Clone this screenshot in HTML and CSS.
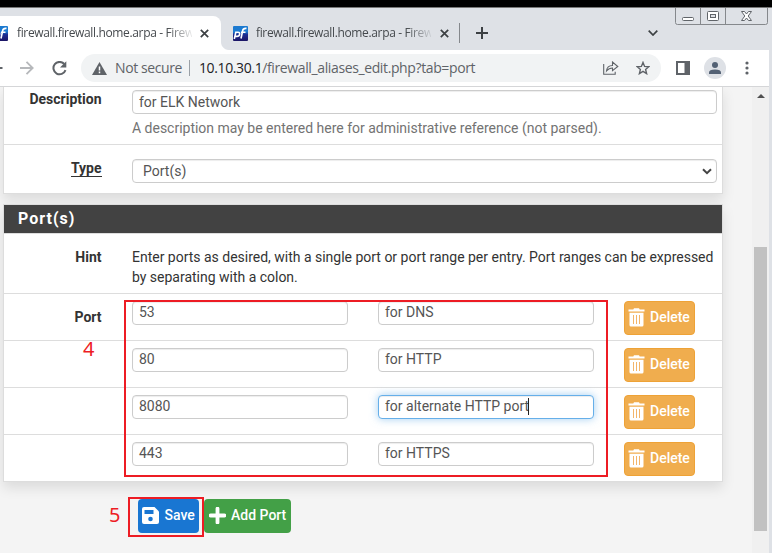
FILE: index.html
```html
<!DOCTYPE html>
<html lang="en">
<head>
<meta charset="utf-8">
<title>firewall.firewall.home.arpa - Firewall: Aliases: Edit</title>
<link rel="stylesheet" href="styles.css">
</head>
<body>
<svg width="0" height="0" class="defs">
  <defs>
    <linearGradient id="pfg" x1="0" y1="0" x2="0" y2="1"><stop offset="0.4" stop-color="#1c7ad0"/><stop offset="0.55" stop-color="#1d2f94"/><stop offset="1" stop-color="#1b1464"/></linearGradient>
    <symbol id="pf" viewBox="0 0 15 15"><rect width="15" height="15" rx="1" fill="url(#pfg)"/><path d="M1.300 13 2.800 6.300h2.200q2 0 1.600 2Q6.200 10.400 4 10.400H2.500M8 12.500l1.700-8Q10.200 2 13.500 2.400M8 6.300h4.500" fill="none" stroke="#fff" stroke-width="1.600"/></symbol>
    <symbol id="x" viewBox="0 0 9 9"><path d="M.8.8l7.400 7.400M8.200.8.800 8.200" stroke="#3c4043" stroke-width="1.700"/></symbol>
    <symbol id="trash" viewBox="0 0 17 19"><path d="M.5 1.500h4.800L6 .3h5l.7 1.200h4.800v2H.5zM1.500 4.800h14v12.200q0 1.500-1.500 1.500H3q-1.500 0-1.500-1.500z" fill="#fff"/><path d="M5.500 7v9M8.500 7v9M11.500 7v9" stroke="#f3b56a" stroke-width="1"/></symbol>
  </defs>
</svg>
<div class="window">
  <header class="tabs">
    <div class="tab active"><svg class="fav"><use href="#pf"/></svg><span class="title">firewall.firewall.home.arpa - Firew</span><svg class="x"><use href="#x"/></svg></div>
    <div class="tab"><svg class="fav"><use href="#pf"/></svg><span class="title">firewall.firewall.home.arpa - Firew</span><svg class="x"><use href="#x"/></svg></div>
    <i class="tabsep"></i>
    <svg class="plus" viewBox="0 0 12 12"><path d="M6 0v12M0 6h12" stroke="#3c4043" stroke-width="2"/></svg>
    <svg class="chev" viewBox="0 0 10 6"><path d="M.7.7 5 5 9.300.7" fill="none" stroke="#3c4043" stroke-width="1.700"/></svg>
    <svg class="controls" viewBox="0 0 94 18"><path d="M.5 0v14.500q0 2 2 2h88q2 0 2-2V0M25.500 0v16M50.500 0v16" fill="none" stroke="#85888c"/><rect x="7.500" y="9.500" width="11" height="3" rx="1" fill="#fff" stroke="#606469"/><rect x="32.500" y="3.500" width="11" height="9" rx="1" fill="#fff" stroke="#606469"/><rect x="35.500" y="6.500" width="5" height="3" fill="#dee1e6" stroke="#606469"/><path d="M66.500 3.500h3l2 2.500 2-2.500h3l-3.300 4.500 3.300 4.500h-3l-2-2.500-2 2.500h-3L69.800 8z" fill="#fff" stroke="#606469"/></svg>
  </header>
  <nav class="toolbar">
    <svg class="back" viewBox="0 0 3 2"><path d="M0 1h2.500" stroke="#5f6368" stroke-width="2"/></svg>
    <svg class="fwd" viewBox="0 0 14 14"><path d="M0 7h12.500M6.500.8 12.700 7l-6.200 6.200" fill="none" stroke="#b6b8bb" stroke-width="1.800"/></svg>
    <svg class="reload" viewBox="0 0 15 15"><path d="M12.300 3A6.200 6.200 0 1 0 13.500 9.200" fill="none" stroke="#5f6368" stroke-width="2"/><path d="M14.300.3v6.200H8z" fill="#5f6368"/></svg>
    <div class="omni">
      <svg class="warn" viewBox="0 0 15 13"><path d="M7.500 0 15 13H0z" fill="#5f6368"/><path d="M7.500 4.500v4M7.500 9.500v1.700" stroke="#fff" stroke-width="1.500"/></svg>
      <span class="insecure">Not secure</span><i class="bar"></i><span class="url"><b>10.10.30.1</b>/firewall_aliases_edit.php?tab=port</span>
      <svg class="share" viewBox="0 0 16 14"><path d="M.7 3v10.300h11.500v-2.500M3.500 10q.5-5.500 6-5.500V1l5.300 4.500-5.300 4.200V7Q6 7 3.500 10z" fill="none" stroke="#5f6368" stroke-width="1.100"/></svg>
      <svg class="star" viewBox="0 0 14 14"><path d="m7 1.400 1.600 4 4.200.300-3.200 2.700 1 4.200L7 10.300l-3.600 2.300 1-4.200L1.200 5.700l4.200-.3z" fill="none" stroke="#5f6368" stroke-width="1.400"/></svg>
    </div>
    <svg class="side" viewBox="0 0 14 14"><rect width="14" height="14" fill="#5f6368"/><path d="M2 2h6.500v10H2z" fill="#fff"/></svg>
    <svg class="user" viewBox="0 0 22 22"><circle cx="11" cy="11" r="11" fill="#dee1e6"/><circle cx="11" cy="8" r="3" fill="#536174"/><path d="M5 17v-1.500q0-3 6-3t6 3V17z" fill="#536174"/></svg>
    <svg class="dots" viewBox="0 0 4 14"><g fill="#5f6368"><circle cx="2" cy="2" r="1.600"/><circle cx="2" cy="7" r="1.600"/><circle cx="2" cy="12" r="1.600"/></g></svg>
  </nav>
  <div class="view">
    <main class="page">
      <section class="panel first">
        <div class="row desc"><label>Description</label><div class="field"><div class="input">for ELK Network</div><p class="help">A description may be entered here for administrative reference (not parsed).</p></div></div>
        <div class="row type"><label><u>Type</u></label><div class="field"><div class="input select"><span>Port(s)</span><svg viewBox="0 0 10 7"><path d="M1 1.200 5 5.200 9 1.200" fill="none" stroke="#444" stroke-width="2"/></svg></div></div></div>
      </section>
      <section class="panel ports">
        <h2>Port(s)</h2>
        <div class="row hint"><label>Hint</label><div class="field">Enter ports as desired, with a single port or port range per entry. Port ranges can be expressed<br>by separating with a colon.</div></div>
        <div class="row port"><label>Port</label><div class="input">53</div><div class="input">for DNS</div><div class="btn del"><svg><use href="#trash"/></svg><span>Delete</span></div></div>
        <div class="row port"><label></label><div class="input">80</div><div class="input">for HTTP</div><div class="btn del"><svg><use href="#trash"/></svg><span>Delete</span></div></div>
        <div class="row port"><label></label><div class="input">8080</div><div class="input focus">for alternate HTTP port<i class="caret"></i></div><div class="btn del"><svg><use href="#trash"/></svg><span>Delete</span></div></div>
        <div class="row port"><label></label><div class="input">443</div><div class="input">for HTTPS</div><div class="btn del"><svg><use href="#trash"/></svg><span>Delete</span></div></div>
        <div class="mark mark-ports"></div>
        <span class="num num4">4</span>
      </section>
      <div class="actions">
        <div class="btn save"><svg viewBox="0 0 17 17"><path d="M2 0h10.500L17 4.500V15q0 2-2 2H2q-2 0-2-2V2q0-2 2-2z" fill="#fff"/><path d="M2.500 3h9v4h-9z" fill="#1976d2"/><circle cx="8.500" cy="12" r="2.300" fill="#1976d2"/></svg><span>Save</span></div>
        <div class="btn add"><svg viewBox="0 0 16 16"><path d="M8 1.500v13M1.500 8h13" stroke="#fff" stroke-width="3.600" stroke-linecap="round"/></svg><span>Add Port</span></div>
        <div class="mark mark-save"></div>
        <span class="num num5">5</span>
      </div>
    </main>
    <aside class="scroll"><i class="up"></i><i class="thumb"></i></aside>
  </div>
</div>
</body>
</html>
```
FILE: styles.css
```css
* { box-sizing: border-box; }
body { margin: 0; background: #dee1e6; overflow: hidden; }
svg { display: block; flex: none; }
i { display: block; flex: none; }
.defs { position: absolute; }
.window { width: 772px; height: 553px; border-top: 7px solid #000; overflow: hidden; }
.tabs { height: 43px; border-top: 1px solid #777; background: #dee1e6; display: flex; padding-top: 8px; font: 12px/34px "Open Sans", sans-serif; color: #45494d; }
.tab { width: 221px; height: 34px; display: flex; align-items: center; }
.tab.active { background: #fff; border-radius: 0 8px 0 0; }
.tab + .tab { width: 238px; padding-left: 12px; background: radial-gradient(circle at 8px 0, #dee1e6 7.500px, #fff 8.500px) 0 100% / 8px 8px no-repeat; }
.fav { width: 15px; height: 15px; }
.active .fav { margin-left: -7px; }
.title { width: 175px; margin-left: 9px; overflow: hidden; white-space: nowrap; letter-spacing: -0.35px; -webkit-mask-image: linear-gradient(90deg, #000 150px, transparent 178px); }
.tab + .tab .title { margin-left: 8px; }
.x { width: 9px; height: 9px; margin-left: 8px; }
.tab + .tab .x { margin-left: 9px; }
.tabsep { width: 1px; height: 20px; margin-top: 7px; background: #85888c; }
.plus { width: 12px; height: 12px; margin: 11px 0 0 16px; }
.chev { width: 10px; height: 6px; margin: 14px 0 0 160px; }
.controls { width: 94px; height: 18px; margin: -8px 0 0 17px; }
.toolbar { width: 769px; height: 37px; background: #fff; border-bottom: 1px solid #d5d6d8; display: flex; align-items: center; }
.back { width: 3px; height: 2px; }
.fwd { width: 14px; height: 14px; margin-left: 17px; }
.reload { width: 15px; height: 15px; margin-left: 18px; }
.omni { width: 580px; height: 28px; margin-left: 14px; border-radius: 14px; background: #f1f3f4; display: flex; align-items: center; padding-left: 11px; font: 14px/28px "Open Sans", sans-serif; color: #5f6368; white-space: nowrap; }
.warn { width: 15px; height: 13px; }
.insecure { width: 74px; margin-left: 8px; letter-spacing: -.4px; }
.bar { width: 1px; height: 16px; background: #9aa0a6; }
.url { width: 404px; margin-left: 9px; letter-spacing: -.38px; }
.url b { font-weight: 400; color: #202124; }
.share { width: 16px; height: 14px; }
.star { width: 14px; height: 14px; margin-left: 17px; }
.side { width: 14px; height: 14px; margin-left: 15px; }
.user { width: 22px; height: 22px; margin-left: 14px; }
.dots { width: 4px; height: 14px; margin-left: 19px; }
.view { display: flex; width: 769px; height: 466px; background: #f4f4f4; overflow: hidden; }
.page { width: 752px; padding-left: 3px; font: 14px/20px Roboto, sans-serif; color: #333; }
.panel { position: relative; width: 720px; background: #fff; border: 1px solid #ddd; box-shadow: 0 6px 12px rgba(0,0,0,.1); }
.first { height: 107px; border-top: 0; }
.row { display: flex; border-bottom: 1px solid #ddd; }
.row:last-of-type { border-bottom: 0; }
.row label { width: 97.500px; margin-right: 30.500px; text-align: right; font-weight: 700; flex: none; }
.desc { height: 58px; padding-top: 3px; }
.type { height: 48px; padding-top: 14px; border: 0; }
.desc label, .type label { margin-top: -1px; }
.type u { text-decoration: none; border-bottom: 1px solid #333; }
.input { width: 585px; height: 24px; padding: 0 6px; border: 1px solid #ccc; border-radius: 4px; background: #fff; box-shadow: inset 0 1px 1px rgba(0,0,0,.075); color: #555; line-height: 22px; white-space: nowrap; }
.select { display: flex; justify-content: space-between; align-items: center; padding: 0 4px 0 10px; }
.select svg { width: 10px; height: 7px; }
.help { margin: 4px 0 0; color: #737373; white-space: nowrap; }
.help, .hint .field { letter-spacing: -.01px; }
.ports { height: 278px; margin-top: 10px; }
h2 { height: 29px; margin: 0; padding-left: 14px; background: #424242; border-bottom: 1px solid #ddd; color: #fff; font: 700 16px/27px Roboto, sans-serif; letter-spacing: 1px; }
.hint { height: 60px; padding-top: 13px; white-space: nowrap; }
.port { height: 47px; padding-top: 7px; }
.port label { padding-top: 6px; }
.port .input { width: 216px; margin-right: 30px; line-height: 20px; }
.port .focus { display: flex; border-color: #66afe9; box-shadow: inset 0 1px 1px rgba(0,0,0,.075), 0 0 8px rgba(102,175,233,.6); }
.caret { width: 1px; height: 17px; margin: 2px 0 0 -1px; background: #222; }
.btn { height: 34px; border-radius: 4px; display: flex; align-items: center; color: #fff; font-weight: 500; white-space: nowrap; }
.btn span { margin-top: -2px; }
.del { width: 71px; padding-left: 3px; background: #f0ad4e; border: 1px solid #eea236; }
.del svg { width: 17px; height: 19px; margin: -1px 5px 0 0; }
.actions { position: relative; display: flex; gap: 5px; padding: 17px 0 0 135px; }
.save { width: 61px; padding-left: 4px; background: #1976d2; }
.save svg { width: 17px; height: 17px; margin: -1px 5.500px 0 0; }
.add { width: 87px; padding-left: 5px; background: #43a047; }
.add svg { width: 17px; height: 17px; margin: -1px 5px 0 0; }
.mark { position: absolute; border: 2px solid #ed1c24; }
.mark-ports { left: 120px; top: 95px; width: 484px; height: 177px; }
.mark-save { left: 125px; top: 15px; width: 76px; height: 40px; }
.num { position: absolute; color: #ed1c24; font: 20px/24px "Noto Sans", sans-serif; }
.num4 { left: 79px; top: 132px; }
.num5 { left: 106px; top: 21px; }
.scroll { width: 17px; background: #f0f0f0; padding-top: 7px; }
.up { width: 0; border: 4px solid transparent; border-top: 0; border-bottom-color: #505050; margin-left: 5px; }
.thumb { width: 13px; height: 284px; margin: 149px 0 0 2px; background: #c1c1c1; }
```
